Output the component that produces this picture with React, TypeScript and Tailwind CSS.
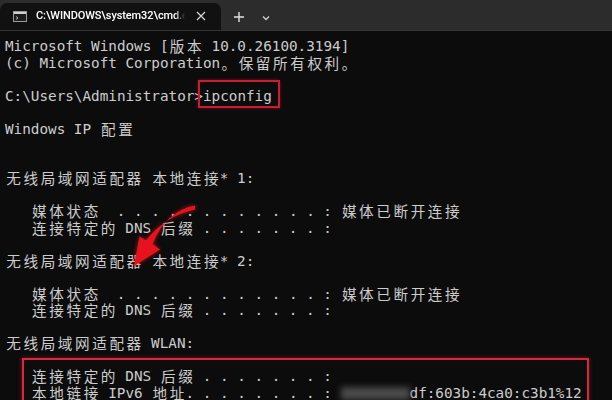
import { Fragment, type ReactNode } from "react";

const isWide = (c: string) => /[\u3000-\u303f\u4e00-\u9fff\uff00-\uffef]/.test(c);

// terminal cells: ascii = 1 cell (8.6px), CJK = 2 cells
function Cells({ text }: { text: string }) {
  const out: ReactNode[] = [];
  let run = "";
  [...text].forEach((c, i) => {
    if (isWide(c)) {
      if (run) out.push(<Fragment key={`r-${i}`}>{run}</Fragment>);
      run = "";
      out.push(
        <span
          key={`w-${i}`}
          className="inline-block w-[17.2px] text-center align-top leading-[16.5px] font-['Noto_Sans_CJK_SC',sans-serif] text-[14.6px]"
        >
          {c}
        </span>
      );
    } else {
      run += c;
    }
  });
  if (run) out.push(<Fragment key="r-end">{run}</Fragment>);
  return <>{out}</>;
}

const lines: (string | null)[] = [
  "Microsoft Windows [版本 10.0.26100.3194]",
  "(c) Microsoft Corporation。保留所有权利。",
  "",
  "C:\\Users\\Administrator>ipconfig",
  "",
  "Windows IP 配置",
  "",
  "",
  "无线局域网适配器 本地连接* 1:",
  "",
  "   媒体状态  . . . . . . . . . . . . : 媒体已断开连接",
  "   连接特定的 DNS 后缀 . . . . . . . :",
  "",
  "无线局域网适配器 本地连接* 2:",
  "",
  "   媒体状态  . . . . . . . . . . . . : 媒体已断开连接",
  "   连接特定的 DNS 后缀 . . . . . . . :",
  "",
  "无线局域网适配器 WLAN:",
  "",
  "   连接特定的 DNS 后缀 . . . . . . . :",
  null,
];

export default function App() {
  return (
    <div className="relative w-[612px] h-[400px] overflow-hidden bg-[#0c0c0c]">
      {/* Title bar */}
      <div className="h-[31px] bg-[#2c2c2c] flex items-end border-b border-[#343434]">
        <div className="h-[27px] w-[221px] rounded-t-[7px] bg-[#111111] flex items-center pl-[13px] pr-[15px]">
          <svg width="14" height="11" viewBox="0 0 14 11" className="shrink-0">
            <rect x="0.5" y="0.5" width="13" height="10" fill="#1c1c1c" stroke="#9a9a9a" />
            <rect x="1" y="1" width="12" height="2" fill="#d0d0d0" />
            <path d="M3 5.5 L5 7 L3 8.5" stroke="#bdbdbd" strokeWidth="0.9" fill="none" />
          </svg>
          <div className="ml-[9px] w-[149px] overflow-hidden whitespace-nowrap text-[11px] text-white font-['Roboto',sans-serif] font-medium tracking-[-0.1px] [mask-image:linear-gradient(to_right,black_93%,transparent)]">
            C:\WINDOWS\system32\cmd.exe
          </div>
          <svg width="10" height="10" viewBox="0 0 10 10" className="ml-auto mb-[1px]">
            <path d="M1 1 L9 9 M9 1 L1 9" stroke="#d6d6d6" strokeWidth="1.2" />
          </svg>
        </div>
        <div className="h-[27px] flex items-center">
          <svg width="12" height="12" viewBox="0 0 12 12" className="ml-[12px]">
            <path d="M6 1 V11 M1 6 H11" stroke="#e2e2e2" strokeWidth="1.4" />
          </svg>
          <svg width="10" height="8" viewBox="0 0 10 8" className="ml-[16px] mt-[2px]">
            <path d="M2 2.5 L5 5.5 L8 2.5" stroke="#d0d0d0" strokeWidth="1.3" fill="none" />
          </svg>
        </div>
      </div>

      {/* Console */}
      <div className="pt-[7px] pl-[5px] text-[#cccccc] font-['DejaVu_Sans_Mono',monospace] text-[14.3px] whitespace-pre">
        {lines.map((l, i) =>
          <div key={`line-${i}`} className="h-[16.5px] leading-[16.5px]">
            {l === null ? (
              <>
                <Cells text="   本地链接 IPv6 地址. . . . . . . . : " />
                <span className="inline-block w-[69px] h-[13px] align-middle bg-[#4a4a4a] blur-[3px]" />
                df:603b:4ca0:c3b1%12
              </>
            ) : (
              <Cells text={l} />
            )}
          </div>
        )}
      </div>

      {/* Annotations */}
      <div className="absolute left-[198px] top-[80px] w-[82px] h-[28px] border-2 border-[#c81e32] shadow-[0_0_3px_rgba(200,20,40,0.6)]" />
      <div className="absolute left-[22px] top-[358px] w-[567px] h-[60px] border-[2.5px] border-[#d8283e] shadow-[0_0_4px_rgba(180,20,40,0.7)]" />

      <svg
        className="absolute left-0 top-0 drop-shadow-[0_0_2px_rgba(255,30,30,0.7)]"
        width="612"
        height="400"
        viewBox="0 0 612 400"
      >
        <path
          d="M195 205.5 Q166 211 152.5 244 L160 249.5 L134 266 L139.5 236.5 L146 240.5 Q165 216 195 209.5 Z"
          fill="#e8121c"
        />
      </svg>
    </div>
  );
}
